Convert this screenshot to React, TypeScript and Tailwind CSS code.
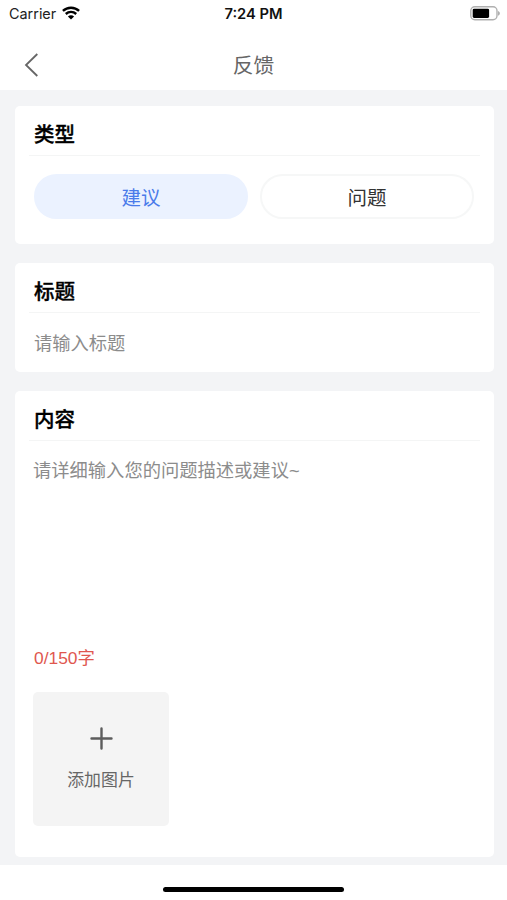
import React, { useState } from "react";

function WifiIcon() {
  return (
    <svg width="18" height="14" viewBox="0 0 18 14" fill="none" stroke="#000" strokeWidth="2.4" className="-mt-[2px]">
      <path d="M0.9 4.9C5.4 0.6 12.6 0.6 17.1 4.9" />
      <path d="M3.8 8C6.8 5.2 11.2 5.2 14.2 8" />
      <path d="M9 13.6L5.9 10.5C7.6 8.9 10.4 8.9 12.1 10.5Z" fill="#000" stroke="none" />
    </svg>
  );
}

function BatteryIcon() {
  return (
    <svg width="31" height="15" viewBox="0 0 31 15" fill="none">
      <rect x="0.8" y="0.8" width="26.2" height="13" rx="4" stroke="#b0b0b0" strokeWidth="1.4" />
      <rect x="2.7" y="2.7" width="16.4" height="9.2" rx="1.4" fill="#000" />
      <path d="M28 4.9C30.5 5.9 30.5 8.7 28 9.7Z" fill="#b0b0b0" />
    </svg>
  );
}

function Card({ title, className, children }: { title: string; className: string; children: React.ReactNode }) {
  return (
    <section className={`rounded-[5px] bg-white px-[14px] ${className}`}>
      <h2 className="h-[50px] border-b border-[#f4f5f5] pt-[14px] pl-[5px] text-[20.5px] leading-[30px] font-medium text-black [-webkit-text-stroke:0.35px_black]">
        {title}
      </h2>
      {children}
    </section>
  );
}

export default function App() {
  const [type, setType] = useState("建议");
  const [title, setTitle] = useState("");
  const [content, setContent] = useState("");

  return (
    <div className="flex h-[900px] w-[507px] flex-col overflow-hidden bg-white font-['Liberation_Sans','Noto_Sans_CJK_SC',sans-serif]">
      <div className="grid h-[28px] grid-cols-3 items-center font-['Inter',sans-serif] text-[14px] leading-[20px]">
        <div className="flex items-center gap-[6px] pl-[9px] text-[#222]">
          <span className="text-[14.4px]">Carrier</span>
          <WifiIcon />
        </div>
        <div className="text-center text-[14.7px] font-semibold text-[#111]">7:24 PM</div>
        <div className="flex justify-end pr-[6px] pb-[2px]">
          <BatteryIcon />
        </div>
      </div>

      <header className="grid h-[62px] grid-cols-[60px_1fr_60px] items-center pt-[12px]">
        <button className="pl-[24px]" aria-label="返回">
          <svg width="15" height="24" viewBox="0 0 15 24" fill="none" stroke="#666" strokeWidth="1.8">
            <path d="M13.3 1L2 12L13.3 23" />
          </svg>
        </button>
        <h1 className="pt-[2px] text-center text-[20.7px] leading-[30px] font-normal text-[#666]">反馈</h1>
      </header>

      <main className="flex h-[775px] flex-col gap-[19px] bg-[#f3f4f6] pr-[13px] pl-[15px] pt-[16px]">
        <Card title="类型" className="h-[138px]">
          <div className="flex gap-[12px] pr-[6px] pl-[5px] pt-[18px]">
            {["建议", "问题"].map((name) => (
              <button
                key={name}
                onClick={() => setType(name)}
                className={`h-[45px] flex-1 rounded-full border-[2px] pt-[2px] text-[19.5px] leading-[28px] ${
                  type === name ? "border-[#ebf2ff] bg-[#ebf2ff] text-[#4a7bea]" : "border-[#f6f7f7] bg-white text-[#333]"
                }`}
              >
                {name}
              </button>
            ))}
          </div>
        </Card>

        <Card title="标题" className="h-[109px]">
          <input
            value={title}
            onChange={(e) => setTitle(e.target.value)}
            placeholder="请输入标题"
            className="mt-[17px] block h-[28px] w-full pl-[5px] text-[18.3px] leading-[28px] outline-none placeholder:text-[#8c8c8c]"
          />
        </Card>

        <Card title="内容" className="h-[466px]">
          <textarea
            value={content}
            maxLength={150}
            onChange={(e) => setContent(e.target.value)}
            placeholder="请详细输入您的问题描述或建议~"
            className="mt-[16px] block h-[188px] w-full resize-none pl-[4px] text-[18.3px] leading-[28px] outline-none placeholder:text-[#8c8c8c]"
          />
          <p className="pl-[5px] text-[17.4px] leading-[26px] text-[#e0574f]">{content.length}/150字</p>
          <button className="mt-[21px] ml-[4px] flex h-[134px] w-[136px] flex-col items-center rounded-[5px] bg-[#f4f4f4] pt-[35px]">
            <svg width="23" height="23" viewBox="0 0 23 23" stroke="#5c5c5c" strokeWidth="2.4" strokeLinecap="round">
              <path d="M11.5 1.5V21.5M1.5 11.5H21.5" />
            </svg>
            <span className="mt-[18px] text-[16.9px] leading-[25px] text-[#666]">添加图片</span>
          </button>
        </Card>
      </main>

      <footer className="flex h-[35px] justify-center pt-[22px]">
        <div className="h-[5px] w-[181px] rounded-full bg-black" />
      </footer>
    </div>
  );
}
